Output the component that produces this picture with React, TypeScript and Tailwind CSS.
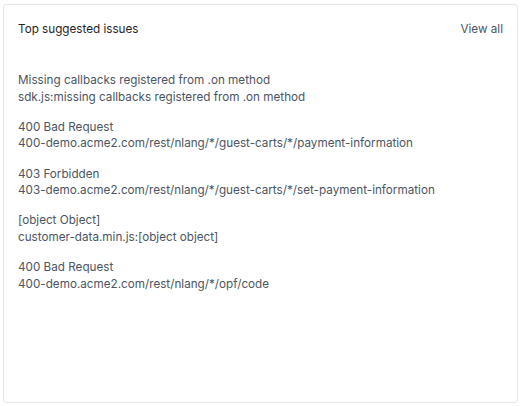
const issues = [
  { title: "Missing callbacks registered from .on method", detail: "sdk.js:missing callbacks registered from .on method" },
  { title: "400 Bad Request", detail: "400-demo.acme2.com/rest/nlang/*/guest-carts/*/payment-information" },
  { title: "403 Forbidden", detail: "403-demo.acme2.com/rest/nlang/*/guest-carts/*/set-payment-information" },
  { title: "[object Object]", detail: "customer-data.min.js:[object object]" },
  { title: "400 Bad Request", detail: "400-demo.acme2.com/rest/nlang/*/opf/code" },
];

export default function App() {
  return (
    <div className="w-[523px] h-[406px] bg-white pt-[4px] pl-[3px] pr-[5px] pb-[3px] font-['Inter',sans-serif]">
      <div className="h-full rounded-[3px] border border-[#e3e6ea] bg-white pl-[14px] pr-[14px]">
        {/* Header */}
        <div className="flex items-center justify-between pt-[16px] pb-[10px]">
          <h2 className="text-[11.7px] leading-[16px] text-[#1f2328]">Top suggested issues</h2>
          <a className="text-[11.7px] leading-[16px] text-[#4b5563]">View all</a>
        </div>

        {/* Issue list */}
        <div className="mt-[25px] flex flex-col gap-[13.75px]">
          {issues.map((issue, i) => (
            <div key={i} className="text-[11.7px] leading-[16.5px] text-[#4b5563]">
              <div>{issue.title}</div>
              <div>{issue.detail}</div>
            </div>
          ))}
        </div>
      </div>
    </div>
  );
}
